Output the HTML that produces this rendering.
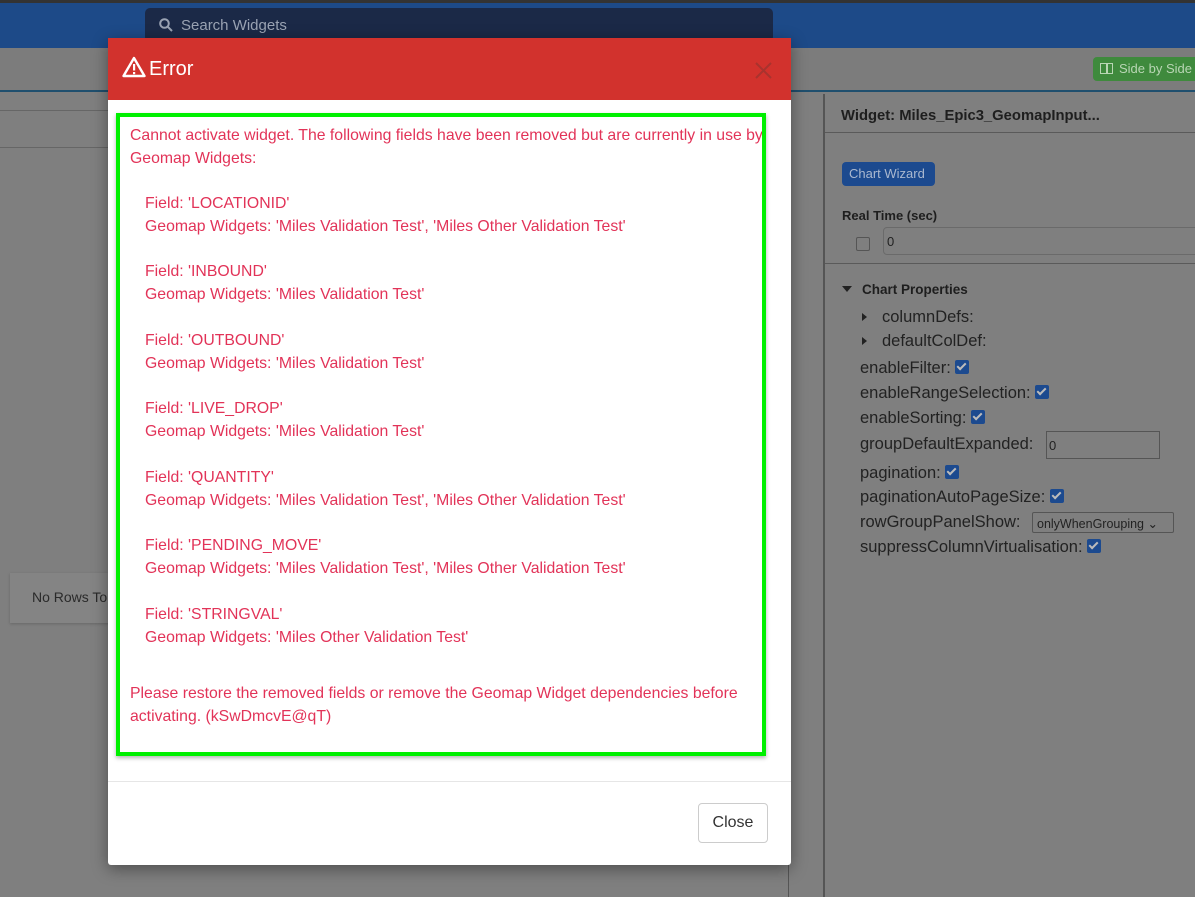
<!DOCTYPE html>
<html style="background:#7f7f7f"><head><meta charset="utf-8"><style>
*{box-sizing:border-box;margin:0;padding:0}
body{width:1195px;height:897px;overflow:hidden;background:#7f7f7f;font-family:"Liberation Sans",sans-serif;position:relative}
.abs{position:absolute}
.bg{left:0;top:0;width:1195px;height:897px;background:#7f7f7f}
.top{left:0;top:0;width:1195px;height:48px;background:#1d4a88;border-top:3px solid #333}
.search{left:145px;top:8px;width:628px;height:34px;background:#1b2947;border-radius:5px;color:#9aa3b3;font-size:15px;padding:9px 0 0 36px}
.bar2{left:0;top:48px;width:1195px;height:44px;background:#7c7c7c;border-bottom:2px solid #1f4f6e}
.side{left:1093px;top:57px;width:110px;height:24px;background:#3f8a3d;border-radius:4px;color:#b9d6b4;font-size:13px;padding:4px 0 0 26px}
.rp{left:823px;top:94px;width:372px;height:803px;border-left:2px solid #555;color:#222;font-size:13px}
.lbl{color:#1e1e1e;font-weight:bold;font-size:13px}
.cb{display:inline-block;width:14px;height:14px;background:#1c4a8f;border-radius:2px;vertical-align:-1px;position:relative}
.cb:after{content:"";position:absolute;left:4px;top:1px;width:3px;height:7px;border:solid #bbb;border-width:0 2px 2px 0;transform:rotate(45deg)}
.prop{position:absolute;left:35px;font-size:16.5px;color:#222;white-space:nowrap}
.modal{left:108px;top:38px;width:683px;height:827px;background:#fff;border-radius:3px;box-shadow:0 4px 16px rgba(0,0,0,.4)}
.mh{left:0;top:0;width:683px;height:62px;background:#d2322d;color:#fff;font-size:20px}
.green{left:8px;top:75px;width:650px;height:643px;border:4px solid #00f000;box-shadow:0 2px 4px rgba(0,0,0,.3)}
.t{position:absolute;color:#e23358;font-size:15.8px;white-space:nowrap}
</style></head><body>
<div class="abs bg"></div>
<div class="abs top"></div>
<div class="abs search"><svg class="abs" style="left:14px;top:10px" width="14" height="14" viewBox="0 0 14 14"><circle cx="5.5" cy="5.5" r="4.3" fill="none" stroke="#9aa3b3" stroke-width="2"/><path d="M8.7 8.7L13 13" stroke="#9aa3b3" stroke-width="2"/></svg>Search Widgets</div>
<div class="abs bar2"></div>
<div class="abs side"><span class="abs" style="left:7px;top:6px;width:13px;height:11px;border:1.5px solid #b9d6b4"></span><span class="abs" style="left:13px;top:6px;width:1.5px;height:11px;background:#b9d6b4"></span>Side by Side</div>
<div class="abs" style="left:0;top:110px;width:108px;height:1px;background:#666"></div>
<div class="abs" style="left:0;top:147px;width:108px;height:1px;background:#666"></div>
<div class="abs" style="left:10px;top:573px;width:100px;height:50px;background:#848484;box-shadow:0 1px 3px rgba(0,0,0,.2);color:#2a2a2a;font-size:14px;padding:16px 0 0 22px">No Rows To</div>
<div class="abs" style="left:788px;top:865px;width:1px;height:32px;background:#555"></div>
<div class="abs rp">
 <div class="abs lbl" style="left:16px;top:14px;font-size:14.8px">Widget: Miles_Epic3_GeomapInput...</div>
 <div class="abs" style="left:0;top:38px;width:372px;height:1px;background:#5a5a5a"></div>
 <div class="abs" style="left:17px;top:68px;width:93px;height:24px;background:#1c4a8f;border-radius:4px;color:#aab8cf;font-size:13px;padding:4px 0 0 7px">Chart Wizard</div>
 <div class="abs lbl" style="left:17px;top:114px">Real Time (sec)</div>
 <div class="abs" style="left:31px;top:143px;width:14px;height:14px;border:1.5px solid #555;border-radius:2px"></div>
 <div class="abs" style="left:58px;top:133px;width:320px;height:28px;border:1px solid #6a6a6a;border-radius:4px;padding:6px 0 0 3px;font-size:13px">0</div>
 <div class="abs" style="left:0;top:169px;width:372px;height:1px;background:#5a5a5a"></div>
 <div class="abs" style="left:17px;top:192px;width:0;height:0;border-left:5px solid transparent;border-right:5px solid transparent;border-top:6px solid #222"></div>
 <div class="abs lbl" style="left:37px;top:188px;font-size:13.5px">Chart Properties</div>
 <div class="abs" style="left:37px;top:219px;border-top:4px solid transparent;border-bottom:4px solid transparent;border-left:5px solid #222"></div>
 <div class="prop" style="left:57px;top:214px">columnDefs:</div>
 <div class="abs" style="left:37px;top:243px;border-top:4px solid transparent;border-bottom:4px solid transparent;border-left:5px solid #222"></div>
 <div class="prop" style="left:57px;top:238px">defaultColDef:</div>
 <div class="prop" style="top:265px">enableFilter: <span class="cb"></span></div>
 <div class="prop" style="top:290px">enableRangeSelection: <span class="cb"></span></div>
 <div class="prop" style="top:315px">enableSorting: <span class="cb"></span></div>
 <div class="prop" style="top:341px">groupDefaultExpanded:</div>
 <div class="abs" style="left:221px;top:337px;width:114px;height:28px;border:1px solid #555;font-size:13px;padding:6px 2px">0</div>
 <div class="prop" style="top:370px">pagination: <span class="cb"></span></div>
 <div class="prop" style="top:394px">paginationAutoPageSize: <span class="cb"></span></div>
 <div class="prop" style="top:419px">rowGroupPanelShow:</div>
 <div class="abs" style="left:207px;top:418px;width:142px;height:21px;border:1px solid #555;border-radius:2px;font-size:12.5px;padding:3px 4px;white-space:nowrap">onlyWhenGrouping ⌄</div>
 <div class="prop" style="top:444px">suppressColumnVirtualisation: <span class="cb"></span></div>
</div>
<div class="abs modal">
 <div class="abs mh">
  <svg class="abs" style="left:14px;top:18px" width="24" height="22" viewBox="0 0 24 22"><path d="M12 2L22.5 20H1.5Z" fill="none" stroke="#fff" stroke-width="2.4" stroke-linejoin="round"/><rect x="11" y="8" width="2.2" height="6.5" fill="#fff"/><rect x="11" y="16" width="2.2" height="2.2" fill="#fff"/></svg>
  <span class="abs" style="left:41px;top:20px">Error</span>
  <svg class="abs" style="left:647px;top:24px" width="17" height="17"><path d="M1 1L16 16M16 1L1 16" stroke="#a8332e" stroke-width="2"/></svg>
 </div>
 <div class="abs green"></div>
 <div class="abs" style="left:12px;top:79px;width:642px;height:635px;overflow:hidden">
 <div class="t" style="left:10px;top:10px">Cannot activate widget. The following fields have been removed but are currently in use by</div>
 </div>
 <div class="t" style="left:22px;top:112px">Geomap Widgets:</div>
 <div class="t" style="left:37px;top:157px">Field: 'LOCATIONID'</div>
 <div class="t" style="left:37px;top:180px">Geomap Widgets: 'Miles Validation Test', 'Miles Other Validation Test'</div>
 <div class="t" style="left:37px;top:225px">Field: 'INBOUND'</div>
 <div class="t" style="left:37px;top:248px">Geomap Widgets: 'Miles Validation Test'</div>
 <div class="t" style="left:37px;top:294px">Field: 'OUTBOUND'</div>
 <div class="t" style="left:37px;top:317px">Geomap Widgets: 'Miles Validation Test'</div>
 <div class="t" style="left:37px;top:362px">Field: 'LIVE_DROP'</div>
 <div class="t" style="left:37px;top:385px">Geomap Widgets: 'Miles Validation Test'</div>
 <div class="t" style="left:37px;top:431px">Field: 'QUANTITY'</div>
 <div class="t" style="left:37px;top:454px">Geomap Widgets: 'Miles Validation Test', 'Miles Other Validation Test'</div>
 <div class="t" style="left:37px;top:499px">Field: 'PENDING_MOVE'</div>
 <div class="t" style="left:37px;top:522px">Geomap Widgets: 'Miles Validation Test', 'Miles Other Validation Test'</div>
 <div class="t" style="left:37px;top:568px">Field: 'STRINGVAL'</div>
 <div class="t" style="left:37px;top:591px">Geomap Widgets: 'Miles Other Validation Test'</div>
 <div class="t" style="left:22px;top:647px">Please restore the removed fields or remove the Geomap Widget dependencies before</div>
 <div class="t" style="left:22px;top:670px">activating. (kSwDmcvE@qT)</div>
 <div class="abs" style="left:0;top:743px;width:683px;height:1px;background:#e6e6e6"></div>
 <div class="abs" style="left:590px;top:765px;width:70px;height:40px;border:1px solid #ccc;border-radius:4px;color:#333;font-size:16px;text-align:center;padding-top:10px">Close</div>
</div>
</body></html>
